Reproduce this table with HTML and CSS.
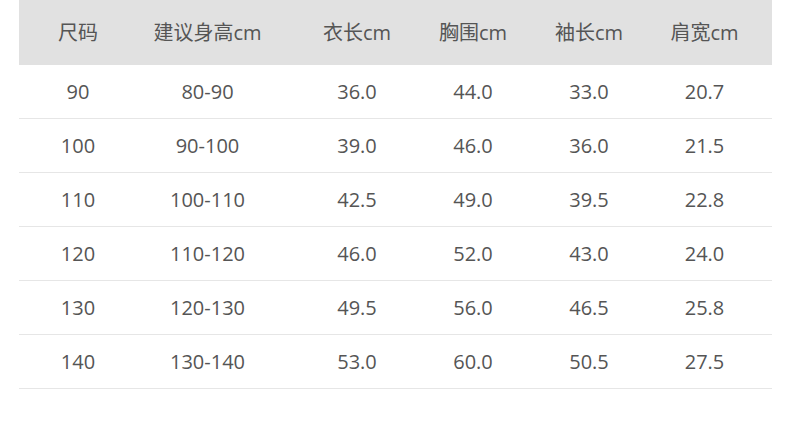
FILE: index.html
```html
<!DOCTYPE html>
<html lang="zh">
<head>
<meta charset="utf-8">
<title>尺码表</title>
<link rel="stylesheet" href="styles.css">
</head>
<body>
<div class="size-table">
  <div class="row head">
    <div>尺码</div><div>建议身高cm</div><div>衣长cm</div><div>胸围cm</div><div>袖长cm</div><div>肩宽cm</div>
  </div>
  <div class="row"><div>90</div><div>80-90</div><div>36.0</div><div>44.0</div><div>33.0</div><div>20.7</div></div>
  <div class="row"><div>100</div><div>90-100</div><div>39.0</div><div>46.0</div><div>36.0</div><div>21.5</div></div>
  <div class="row"><div>110</div><div>100-110</div><div>42.5</div><div>49.0</div><div>39.5</div><div>22.8</div></div>
  <div class="row"><div>120</div><div>110-120</div><div>46.0</div><div>52.0</div><div>43.0</div><div>24.0</div></div>
  <div class="row"><div>130</div><div>120-130</div><div>49.5</div><div>56.0</div><div>46.5</div><div>25.8</div></div>
  <div class="row"><div>140</div><div>130-140</div><div>53.0</div><div>60.0</div><div>50.5</div><div>27.5</div></div>
</div>
</body>
</html>
```
FILE: styles.css
```css
html, body {
  margin: 0;
  padding: 0;
  background: #ffffff;
}
body {
  font-family: "Open Sans", "Noto Sans CJK SC", sans-serif;
  font-size: 20px;
  color: #555555;
}
.size-table {
  margin-left: 19px;
  width: 753px;
}
.row {
  display: grid;
  grid-template-columns: 118px 141px 158px 74px 158px 73px 1fr;
  height: 53px;
  align-items: center;
  border-bottom: 1px solid #e6e6e6;
}
.row > div {
  text-align: center;
  white-space: nowrap;
  line-height: 1;
}
.row.head {
  height: 65px;
  background: #e1e1e1;
  border-bottom: none;
}
```
